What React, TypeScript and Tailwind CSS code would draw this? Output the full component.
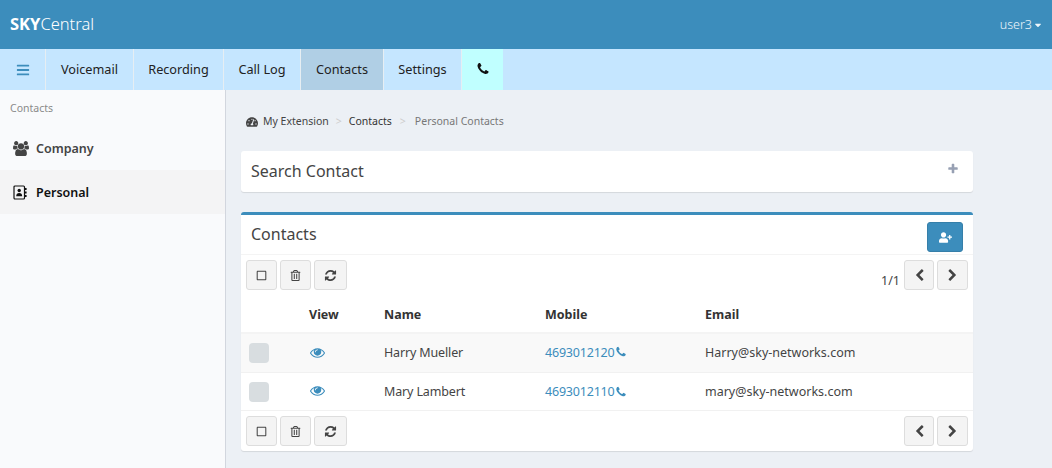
import { FaBars, FaTachometerAlt, FaUserPlus, FaRegSquare, FaRegTrashAlt, FaCaretDown } from "react-icons/fa";
import type { ReactNode } from "react";

const font = { fontFamily: '"Noto Sans", "Open Sans", sans-serif' };

const PHONE = "M1600 1240q0 27-10 70.5t-21 68.5q-21 50-122 106-94 51-186 51-27 0-53-3.5t-57.5-12.5-47-14.5-55.5-20.5-49-18q-98-35-175-83-127-79-264-216t-216-264q-48-77-83-175-3-9-18-49t-20.5-55.5-14.5-47-12.5-57.5-3.5-53q0-92 51-186 56-101 106-122 25-11 68.5-21t70.5-10q14 0 21 3 18 6 53 76 11 19 30 54t35 63.5 31 53.5q3 4 17.5 25t21.5 35.5 7 28.5q0 20-28.5 50t-62 55-62 53-28.5 46q0 9 5 22.5t8.5 20.5 14 24 11.5 19q76 137 174 235t235 174q2 1 19 11.5t24 14 20.5 8.5 22.5 5q18 0 46-28.5t53-62 55-62 50-28.5q14 0 28.5 7t35.5 21.5 25 17.5q25 15 53.5 31t63.5 35 54 30q70 35 76 53 3 7 3 21z";
const EYE = "M1664 960q-152-236-381-353 61 104 61 225 0 185-131.5 316.5t-316.5 131.5-316.5-131.5-131.5-316.5q0-121 61-225-229 117-381 353 133 205 333.5 326.5t434.5 121.5 434.5-121.5 333.5-326.5zm-720-384q0-20-14-34t-34-14q-125 0-214.5 89.5t-89.5 214.5q0 20 14 34t34 14 34-14 14-34q0-86 61-147t147-61q20 0 34-14t14-34zm848 384q0 34-20 69-140 230-376.5 368.5t-499.5 138.5-499.5-139-376.5-368q-20-35-20-69t20-69q140-229 376.5-368t499.5-139 499.5 139 376.5 368q20 35 20 69z";
const PLUS = "M1600 736v192q0 40-28 68t-68 28h-416v416q0 40-28 68t-68 28h-192q-40 0-68-28t-28-68v-416h-416q-40 0-68-28t-28-68v-192q0-40 28-68t68-28h416v-416q0-40 28-68t68-28h192q40 0 68 28t28 68v416h416q40 0 68 28t28 68z";
const LEFT = "M1427 301l-531 531 531 531q19 19 19 45t-19 45l-166 166q-19 19-45 19t-45-19l-742-742q-19-19-19-45t19-45l742-742q19-19 45-19t45 19l166 166q19 19 19 45t-19 45z";
const RIGHT = "M1363 877l-742 742q-19 19-45 19t-45-19l-166-166q-19-19-19-45t19-45l531-531-531-531q-19-19-19-45t19-45l166-166q19-19 45-19t45 19l742 742q19 19 19 45t-19 45z";
const REFRESH = "M1639 1056q0 5-1 7-64 268-268 434.5t-478 166.5q-146 0-282.5-55t-243.5-157l-129 129q-19 19-45 19t-45-19-19-45v-448q0-26 19-45t45-19h448q26 0 45 19t19 45-19 45l-137 137q71 66 161 102t187 36q134 0 250-65t186-179q11-17 53-117 8-23 30-23h192q13 0 22.5 9.5t9.5 22.5zm25-800v448q0 26-19 45t-45 19h-448q-26 0-45-19t-19-45 19-45l138-138q-148-137-349-137-134 0-250 65t-186 179q-11 17-53 117-8 23-30 23h-199q-13 0-22.5-9.5t-9.5-22.5v-7q65-268 270-434.5t480-166.5q146 0 284 55.5t245 156.5l130-129q19-19 45-19t45 19 19 45z";
const USERS = "M593 896q-162 5-265 128h-134q-82 0-138-40.5t-56-118.5q0-353 124-353 6 0 43.5 21t97.5 42.5 119 21.5q67 0 133-23-5 37-5 66 0 139 81 256zm1071 637q0 120-73 189.5t-194 69.5h-874q-121 0-194-69.5t-73-189.5q0-53 3.5-103.5t14-109 26.5-108.5 43-97.5 62-81 85.5-53.5 111.5-20q10 0 43 21.5t73 48 107 48 135 21.5 135-21.5 107-48 73-48 43-21.5q61 0 111.5 20t85.5 53.5 62 81 43 97.5 26.5 108.5 14 109 3.5 103.5zm-1024-1277q0 106-75 181t-181 75-181-75-75-181 75-181 181-75 181 75 75 181zm704 384q0 159-112.5 271.5t-271.5 112.5-271.5-112.5-112.5-271.5 112.5-271.5 271.5-112.5 271.5 112.5 112.5 271.5zm576 225q0 78-56 118.5t-138 40.5h-134q-103-123-265-128 81-117 81-256 0-29-5-66 66 23 133 23 59 0 119-21.5t97.5-42.5 43.5-21q124 0 124 353zm-128-609q0 106-75 181t-181 75-181-75-75-181 75-181 181-75 181 75 75 181z";

function Ico({ d, className, vb = "0 0 1792 1792" }: { d: string; className?: string; vb?: string }) {
  return (
    <svg viewBox={vb} className={className} fill="currentColor" aria-hidden="true">
      <path d={d} />
    </svg>
  );
}

function NavItem({ label, active, w }: { label: string; active?: boolean; w: string }) {
  return (
    <div className={`${w} h-full flex items-center justify-center border-r border-[#e6eef3] text-[12.7px] text-[#222] ${active ? "bg-[#b0cfe5]" : ""}`}>
      {label}
    </div>
  );
}

function Btn({ children, w }: { children: ReactNode; w: string }) {
  return (
    <div className={`${w} h-[30px] flex items-center justify-center rounded-[3px] border border-[#ddd] bg-[#f4f4f4] text-[#444]`}>
      {children}
    </div>
  );
}

function Toolbar({ pager }: { pager?: boolean }) {
  return (
    <div className="flex items-center justify-between pl-[5px] pr-[5px]">
      <div className="flex gap-[3px]">
        <Btn w="w-[31px]"><FaRegSquare className="text-[11px]" /></Btn>
        <Btn w="w-[31px]"><FaRegTrashAlt className="text-[11px]" /></Btn>
        <Btn w="w-[33px]"><Ico d={REFRESH} className="w-[13px] h-[13px]" /></Btn>
      </div>
      <div className="flex items-center gap-[3px]">
        {pager && <span className="text-[12.5px] text-[#444] mr-[1px] mt-[12px]">1/1</span>}
        <Btn w="w-[30px]"><Ico d={LEFT} className="w-[13px] h-[13px]" /></Btn>
        <Btn w="w-[31px]"><Ico d={RIGHT} className="w-[13px] h-[13px]" /></Btn>
      </div>
    </div>
  );
}

function Row({ name, mobile, email, bg, h, pt }: { name: string; mobile: string; email: string; bg: string; h: string; pt: string }) {
  return (
    <tr className={`${bg} ${h} border-b border-[#f1f1f1] text-[12.5px] text-[#444]`}>
      <td className="pl-[8px]">
        <div className="w-[20px] h-[20px] rounded-[4px] bg-[#d8dde0]" />
      </td>
      <td className="pl-[9px]"><Ico d={EYE} className="w-[15px] h-[15px] -mt-[2px] text-[#3c8dbc]" /></td>
      <td className={`pl-[8px] ${pt} tracking-[-0.15px]`}>{name}</td>
      <td className={`pl-[8px] ${pt} text-[#3c8dbc]`}>
        <span className="inline-flex items-center tracking-[-0.2px]">{mobile}<Ico d={PHONE} className="w-[12px] h-[12px] -mt-[2px]" /></span>
      </td>
      <td className={`pl-[8px] ${pt}`}>{email}</td>
    </tr>
  );
}

export default function App() {
  return (
    <div style={font} className="w-[1052px] h-[468px] overflow-hidden flex flex-col bg-[#ecf0f5]">
      <header className="h-[49px] shrink-0 bg-[#3c8dbc] flex items-center justify-between pl-[10px] pr-[9px] text-white">
        <div className="text-[16.5px]"><b className="font-bold">SKY</b><span className="font-light">Central</span></div>
        <div className="flex items-center text-[12.5px] font-light text-[#eef6fb] mt-[1px]">user3<FaCaretDown className="text-[10px] ml-[1px]" /></div>
      </header>
      <nav className="h-[41px] shrink-0 bg-[#c5e6ff] flex items-stretch">
        <div className="w-[46px] h-full flex items-center justify-center border-r border-[#e6eef3] text-[#3c8dbc]"><FaBars className="text-[14px]" /></div>
        <NavItem label="Voicemail" w="w-[88px]" />
        <NavItem label="Recording" w="w-[90px]" />
        <NavItem label="Call Log" w="w-[77px]" />
        <NavItem label="Contacts" w="w-[83px]" active />
        <NavItem label="Settings" w="w-[78px]" />
        <div className="w-[41px] h-full flex items-center justify-center bg-[#c0ffff] text-[#111]"><Ico d={PHONE} className="w-[14px] h-[14px] -mt-[2px]" /></div>
      </nav>
      <div className="flex-1 flex min-h-0">
        <aside className="w-[226px] shrink-0 bg-[#f9fafc] border-r border-[#d2d6de]">
          <div className="h-[36px] pl-[10px] pt-[11px] text-[10.5px] leading-[15px] text-[#8a8a8a]">Contacts</div>
          <div className="h-[44px] flex items-center pl-[13px] gap-[7px] pt-[2px] text-[12.5px] font-semibold text-[#444]">
            <Ico d={USERS} vb="0 0 1920 1792" className="w-[16px] h-[15px] -mt-[2px]" />Company
          </div>
          <div className="h-[44px] flex items-center pl-[13px] gap-[9px] pt-[2px] text-[12.5px] font-semibold text-[#111] bg-[#f4f4f5]">
            <svg viewBox="0 0 14 15" className="w-[14px] h-[15px] -mt-[2px]" aria-hidden="true">
              <rect x="1" y="1" width="10.5" height="13" rx="1" fill="none" stroke="currentColor" strokeWidth="1.2" />
              <circle cx="6.2" cy="5.5" r="1.7" fill="currentColor" />
              <path d="M3.2 11.2c0-2.2 1.2-3.3 3-3.3s3 1.1 3 3.3z" fill="currentColor" />
              <path d="M12 3h1.6v2H12zM12 6.5h1.6v2H12zM12 10h1.6v2H12z" fill="currentColor" />
            </svg>
            Personal
          </div>
        </aside>
        <main className="flex-1 pl-[15px] pr-[79px] min-w-0">
          <div className="h-[61px] flex items-center pl-[5px] pt-[3px] text-[10.5px]">
            <FaTachometerAlt className="text-[12px] text-[#444] mr-[5px]" />
            <span className="text-[#444]">My Extension</span>
            <span className="text-[#ccc] mx-[7px]">&gt;</span>
            <span className="text-[#333]">Contacts</span>
            <span className="text-[#ccc] ml-[8px] mr-[9px]">&gt;</span>
            <span className="text-[#777]">Personal Contacts</span>
          </div>
          <section className="h-[41px] bg-white rounded-[3px] shadow-[0_1px_1px_rgba(0,0,0,0.1)] flex items-center justify-between pl-[10px] pr-[15px]">
            <h3 className="text-[16px] text-[#444] -mt-[2px]">Search Contact</h3>
            <Ico d={PLUS} className="w-[12px] h-[12px] text-[#97a0b3] -mt-[5px] -mr-[1px]" />
          </section>
          <section className="mt-[20px] bg-white rounded-[3px] border-t-[3px] border-[#3c8dbc] shadow-[0_1px_1px_rgba(0,0,0,0.1)]">
            <div className="h-[40px] flex items-center justify-between pl-[10px] pr-[10px] border-b border-[#f4f4f4]">
              <h3 className="text-[16px] text-[#444] -mt-[2px]">Contacts</h3>
              <div className="w-[36px] h-[30px] mt-[5px] rounded-[3px] bg-[#3c8dbc] border border-[#367fa9] flex items-center justify-center text-white">
                <FaUserPlus className="text-[13px]" />
              </div>
            </div>
            <div className="pt-[5px]"><Toolbar pager /></div>
            <table className="w-full table-fixed mt-[1px]">
              <colgroup>
                <col className="w-[60px]" /><col className="w-[75px]" /><col className="w-[161px]" /><col className="w-[160px]" /><col />
              </colgroup>
              <thead>
                <tr className="h-[41px] border-b-2 border-[#f4f4f4] text-[12.5px] text-[#333]">
                  <th />
                  <th className="text-left pl-[8px] pt-[8px] font-bold">View</th>
                  <th className="text-left pl-[8px] pt-[8px] font-bold">Name</th>
                  <th className="text-left pl-[8px] pt-[8px] font-bold">Mobile</th>
                  <th className="text-left pl-[8px] pt-[8px] font-bold">Email</th>
                </tr>
              </thead>
              <tbody>
                <Row name="Harry Mueller" mobile="4693012120" email="Harry@sky-networks.com" bg="bg-[#f9f9f9]" h="h-[40px]" pt="pt-0" />
                <Row name="Mary Lambert" mobile="4693012110" email="mary@sky-networks.com" bg="bg-white" h="h-[38px]" pt="pt-[2px]" />
              </tbody>
            </table>
            <div className="pt-[5px] pb-[5px]"><Toolbar /></div>
          </section>
        </main>
      </div>
    </div>
  );
}
